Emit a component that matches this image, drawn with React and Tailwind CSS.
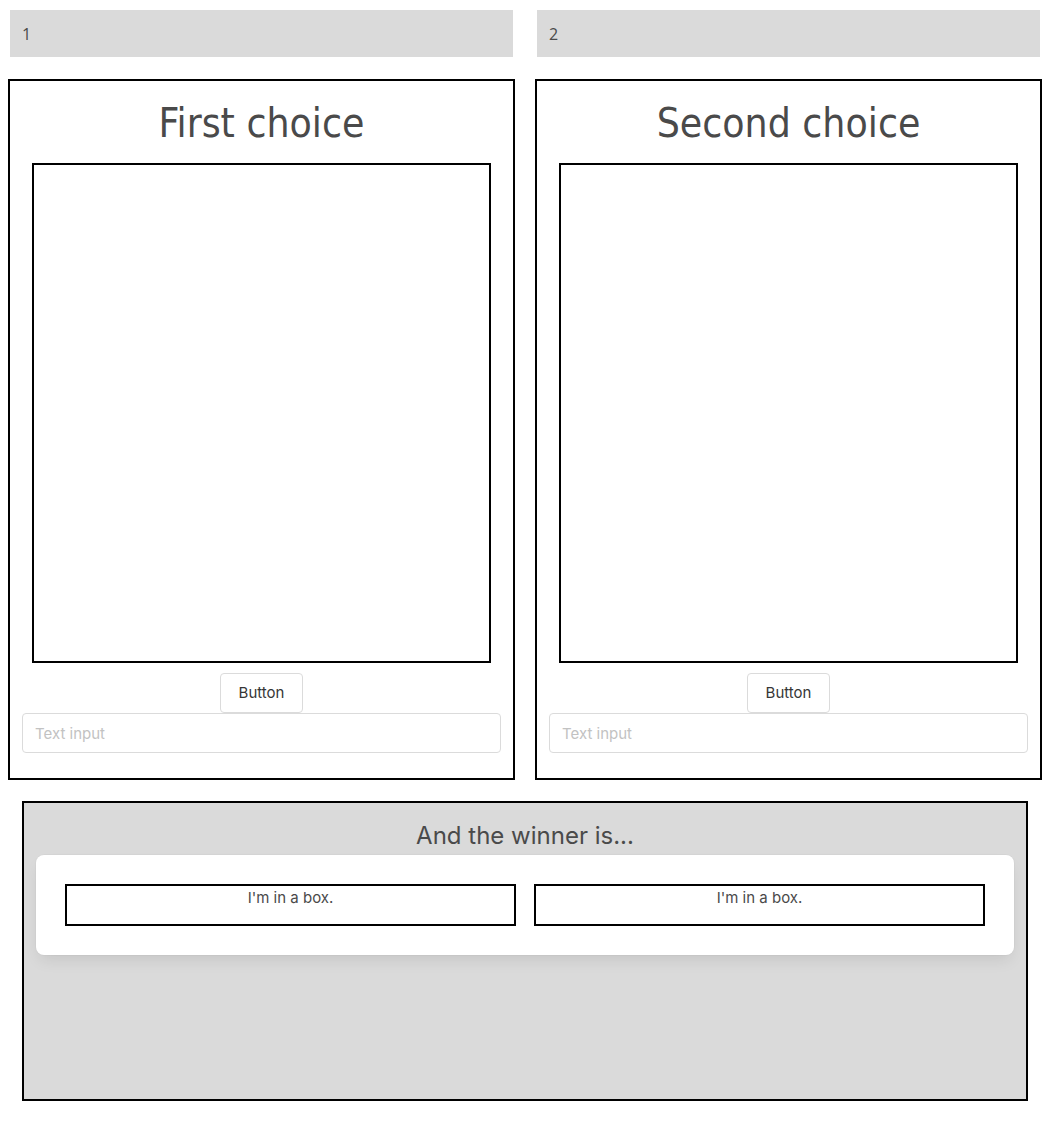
import React from 'react';

const Choice = ({ title }) => (
  <div className="flex flex-col items-center border-2 border-black h-[701px] px-3">
    <h2 className="mt-[14px] h-[56px] text-[40.5px] leading-[56px] text-[#4a4a4a] font-['DejaVu_Sans_Condensed','DejaVu_Sans',sans-serif]">
      {title}
    </h2>
    <div className="mt-[12px] w-[459px] h-[500px] border-2 border-black" />
    <button className="mt-[10px] h-[40px] px-[18px] rounded border border-[#dbdbdb] bg-white text-[15px] text-[#363636] font-['Inter',sans-serif]">
      Button
    </button>
    <input
      type="text"
      placeholder="Text input"
      className="w-full h-[40px] px-3 rounded border border-[#dbdbdb] text-[15px] placeholder-[#c2c2c2] font-['Inter',sans-serif] outline-none"
    />
  </div>
);

const Box = () => (
  <div className="h-[42px] border-2 border-black text-center text-[15px] leading-[24px] text-[#4a4a4a] font-['Inter',sans-serif]">
    I'm in a box.
  </div>
);

export default function App() {
  return (
    <div className="bg-white min-h-screen pb-[38px]">
      <div className="grid grid-cols-2 gap-6 px-[10px] pt-[10px]">
        <div className="h-[47px] bg-[#dadada] px-3 flex items-center text-[16px] text-[#4a4a4a] font-['Open_Sans',sans-serif]">1</div>
        <div className="h-[47px] bg-[#dadada] px-3 flex items-center text-[16px] text-[#4a4a4a] font-['Open_Sans',sans-serif]">2</div>
      </div>
      <div className="grid grid-cols-2 gap-5 px-2 mt-[22px]">
        <Choice title="First choice" />
        <Choice title="Second choice" />
      </div>
      <div className="mx-[22px] mt-[21px] h-[300px] border-2 border-black bg-[#dadada] px-3">
        <div className="pt-[18px] h-[52px] text-center text-[24px] leading-[30px] text-[#4a4a4a] font-['Inter',sans-serif]">
          And the winner is...
        </div>
        <div className="bg-white rounded-lg shadow-[0_8px_16px_-4px_rgba(10,10,10,0.1),0_0_0_1px_rgba(10,10,10,0.02)] p-[29px] grid grid-cols-2 gap-[18px]">
          <Box />
          <Box />
        </div>
      </div>
    </div>
  );
}
